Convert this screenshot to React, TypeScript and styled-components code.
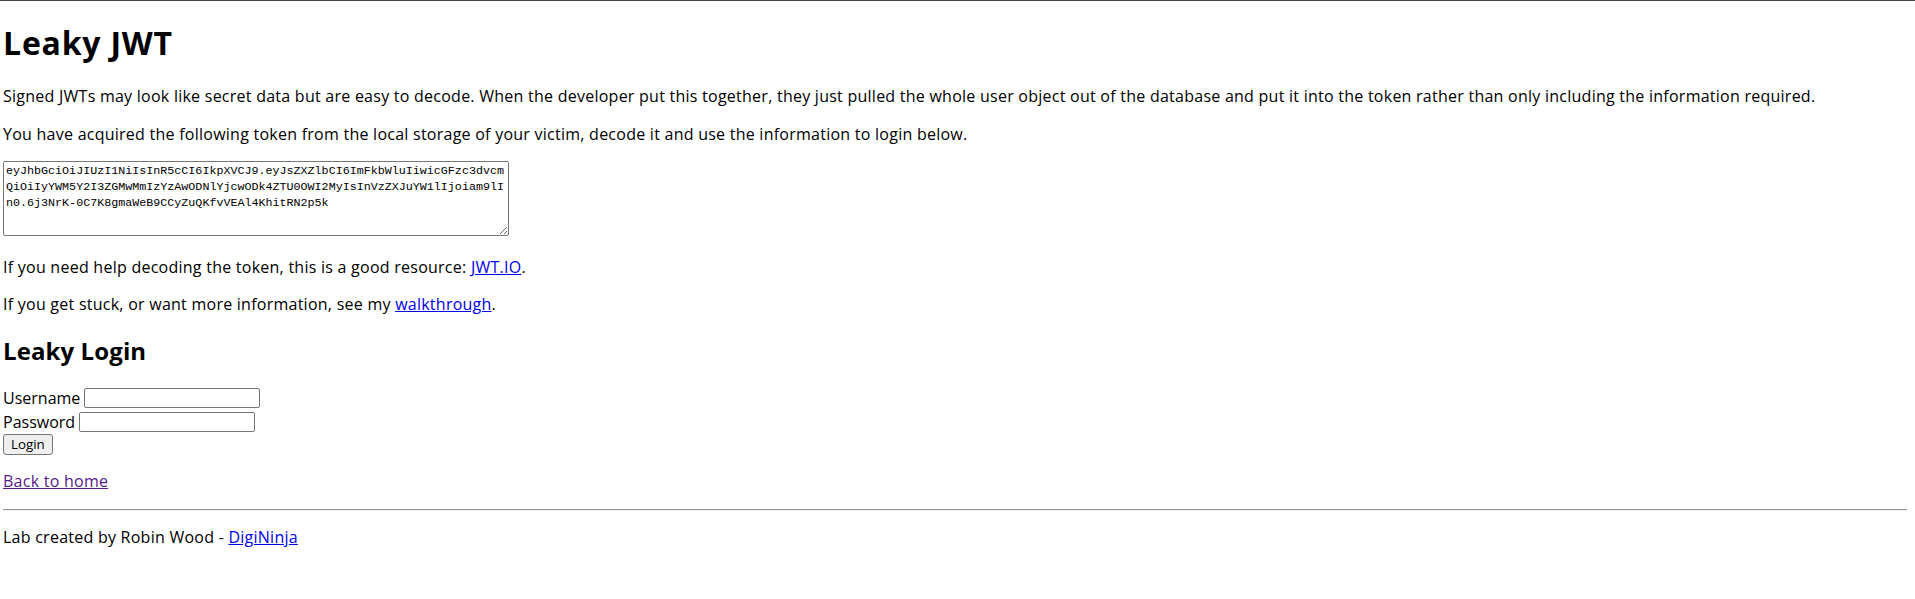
import React from 'react';
import styled, { createGlobalStyle } from 'styled-components';

const TOKEN =
  'eyJhbGciOiJIUzI1NiIsInR5cCI6IkpXVCJ9.eyJsZXZlbCI6ImFkbWluIiwicGFzc3dvcmQiOiIyYWM5Y2I3ZGMwMmIzYzAwODNlYjcwODk4ZTU0OWI2MyIsInVzZXJuYW1lIjoiam9lIn0.6j3NrK-0C7K8gmaWeB9CCyZuQKfvVEAl4KhitRN2p5k';

const GlobalStyle = createGlobalStyle`
  html {
    background: #fff;
  }
  body {
    margin: 0;
    font-family: "Open Sans", "Noto Sans", sans-serif;
    font-size: 16px;
    line-height: 21.28px;
    color: #000;
  }
`;

const Page = styled.div`
  display: flow-root;
  border-top: 1px solid #444;
  padding: 0 8px 8px 3px;
  letter-spacing: 0.25px;
`;

const Title = styled.h1`
  font-size: 32px;
  line-height: 42.5px;
  font-weight: 700;
  letter-spacing: 0.8px;
  margin: 21.44px 0;
`;

const SubTitle = styled.h2`
  font-size: 24px;
  line-height: 32px;
  font-weight: 700;
  letter-spacing: 0.1px;
  margin: 19.92px 0;
`;

const Para = styled.p`
  margin: 16px 0;
`;

const Link = styled.a<{ $visited?: boolean }>`
  color: ${(p) => (p.$visited ? '#551a8b' : '#0000ee')};
  text-decoration: underline;
  cursor: pointer;
`;

const TokenWrap = styled.div`
  padding-bottom: 5px;
`;

const TokenArea = styled.textarea`
  display: block;
  box-sizing: border-box;
  width: 506px;
  height: 75px;
  margin: 0;
  padding: 1px 2px 2px;
  border: 1px solid #767676;
  border-radius: 2px;
  font-family: "Liberation Mono", "DejaVu Sans Mono", monospace;
  font-size: 11.7px;
  line-height: 16px;
  letter-spacing: 0;
  color: #000;
  word-break: break-all;
  background: #fff;
`;

const LoginForm = styled.form`
  display: flex;
  flex-direction: column;
  align-items: flex-start;
  padding: 1px 0 0;
  letter-spacing: 0;
`;

const FieldRow = styled.div<{ $gapAfter: number }>`
  display: flex;
  align-items: center;
  gap: 4px;
  height: 20px;
  margin-bottom: ${(p) => p.$gapAfter}px;
`;

const TextInput = styled.input`
  box-sizing: border-box;
  width: 176px;
  height: 20px;
  margin: 0;
  padding: 1px 2px;
  border: 1px solid #767676;
  border-radius: 2px;
  font-family: inherit;
  font-size: 13.33px;
`;

const SubmitButton = styled.button`
  box-sizing: border-box;
  height: 21px;
  margin: 0;
  padding: 0 7px;
  border: 1px solid #767676;
  border-radius: 3px;
  background: #efefef;
  font-family: "Open Sans", "Noto Sans", sans-serif;
  font-size: 13.33px;
  line-height: 17px;
  color: #000;
`;

const Rule = styled.hr`
  margin: 8px 0;
  height: 0;
  border: none;
  border-top: 1px solid #9a9a9a;
  border-bottom: 1px solid #eeeeee;
`;

export default function App(): React.JSX.Element {
  return (
    <Page>
      <GlobalStyle />
      <Title>Leaky JWT</Title>
      <Para>
        Signed JWTs may look like secret data but are easy to decode. When the developer put this
        together, they just pulled the whole user object out of the database and put it into the
        token rather than only including the information required.
      </Para>
      <Para>
        You have acquired the following token from the local storage of your victim, decode it and
        use the information to login below.
      </Para>
      <TokenWrap>
        <TokenArea defaultValue={TOKEN} readOnly />
      </TokenWrap>
      <Para>
        If you need help decoding the token, this is a good resource: <Link>JWT.IO</Link>.
      </Para>
      <Para>
        If you get stuck, or want more information, see my <Link>walkthrough</Link>.
      </Para>
      <SubTitle>Leaky Login</SubTitle>
      <LoginForm onSubmit={(e) => e.preventDefault()}>
        <FieldRow $gapAfter={4}>
          <label htmlFor="username">Username</label>
          <TextInput id="username" type="text" />
        </FieldRow>
        <FieldRow $gapAfter={2}>
          <label htmlFor="password">Password</label>
          <TextInput id="password" type="password" />
        </FieldRow>
        <SubmitButton type="submit">Login</SubmitButton>
      </LoginForm>
      <Para>
        <Link $visited>Back to home</Link>
      </Para>
      <Rule />
      <Para>
        Lab created by Robin Wood - <Link>DigiNinja</Link>
      </Para>
    </Page>
  );
}
